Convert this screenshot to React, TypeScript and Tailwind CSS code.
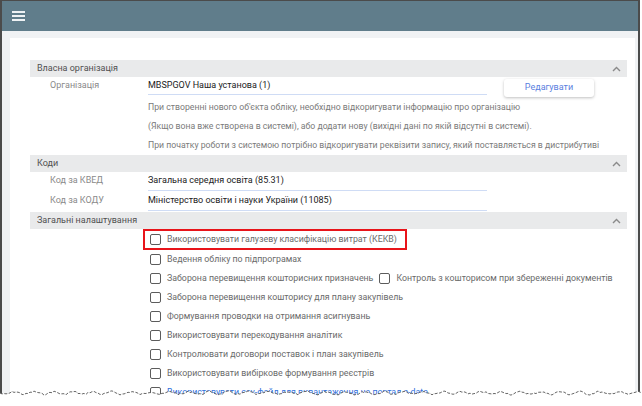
import React from 'react';

const font = { fontFamily: 'Roboto, "Liberation Sans", sans-serif' };

const Chevron = () => (
  <svg width="9" height="6" viewBox="0 0 9 6" className="mr-[6px]">
    <polyline points="1,5 4.5,1.5 8,5" fill="none" stroke="#8a8a8a" strokeWidth="1.4" />
  </svg>
);

const SectionHeader: React.FC<{ title: string }> = ({ title }) => (
  <div className="h-[17px] bg-[#e9eaeb] flex items-center justify-between pl-[7px] text-[9px] text-[#505050] whitespace-nowrap">
    <span>{title}</span>
    <Chevron />
  </div>
);

const Box = () => (
  <span className="inline-block w-[11px] h-[11px] border-[1.5px] border-[#5c5c5c] rounded-[2px] bg-white shrink-0" />
);

const CheckRow: React.FC<{ label: string }> = ({ label }) => (
  <div className="h-[19px] flex items-center pl-[120px] gap-[6px] text-[8.8px] text-[#6a6a6a] whitespace-nowrap">
    <Box />
    <span>{label}</span>
  </div>
);

// jagged line for the torn bottom edge of the screenshot
const tearPoints = (() => {
  const pts: string[] = [];
  let seed = 7;
  for (let x = 0; x <= 642; x += 2) {
    seed = (seed * 9301 + 49297) % 233280;
    const r = seed / 233280;
    const y = 4 + Math.sin(x / 3.1) * 1.3 + (r - 0.5) * 1.8;
    pts.push(`${x},${y.toFixed(1)}`);
  }
  return pts;
})();

export default function App() {
  return (
    <div className="relative w-[642px] h-[406px] bg-white overflow-hidden" style={font}>
      <div className="w-[640px] h-[406px] border-l-2 border-r-2 border-t border-[#4b4b4b] bg-[#f0f2f4] flex flex-col">
        <div className="h-[30px] bg-[#607d8b] flex items-center pl-[10px] shrink-0">
          <div className="flex flex-col gap-[2px] w-[13px]">
            <span className="h-[2px] bg-[#eef2f4]" />
            <span className="h-[2px] bg-[#eef2f4]" />
            <span className="h-[2px] bg-[#eef2f4]" />
          </div>
        </div>
        <div className="flex-1 pl-[8px] pt-[7px] pr-[3px]">
          <div className="bg-white h-full pl-[20px] pr-[8px] pt-[22px] whitespace-nowrap">
            <SectionHeader title="Власна організація" />
            <div className="h-[21px] flex items-start text-[9px]">
              <div className="w-[118px] pl-[20px] h-[18px] flex items-center text-[#8a8a8a]">Організація</div>
              <div className="w-[339px] h-[18px] flex items-center border-b border-[#cfdcf5] text-[#222]">
                MBSPGOV Наша установа (1)
              </div>
              <button className="ml-[17px] mt-[2px] w-[90px] h-[18px] bg-white rounded-[3px] shadow-[0_1px_3px_rgba(0,0,0,0.25)] text-[#5a80e0] text-[9px]">
                Редагувати
              </button>
            </div>
            <div className="pl-[118px] text-[8.7px] text-[#7a7a7a]">
              <div className="h-[19px] leading-[19px]">При створенні нового об'єкта обліку, необхідно відкоригувати інформацію про організацію</div>
              <div className="h-[19px] leading-[19px]">(Якщо вона вже створена в системі), або додати нову (вихідні дані по якій відсутні в системі).</div>
              <div className="h-[19px] leading-[19px]">При початку роботи з системою потрібно відкоригувати реквізити запису, який поставляється в дистрибутиві</div>
            </div>
            <SectionHeader title="Коди" />
            <div className="h-[19px] flex items-start text-[9px]">
              <div className="w-[118px] pl-[20px] h-[18px] flex items-center text-[#8a8a8a]">Код за КВЕД</div>
              <div className="w-[339px] h-[19px] flex items-center border-b border-[#cfdcf5] text-[#222]">
                Загальна середня освіта (85.31)
              </div>
            </div>
            <div className="h-[21px] flex items-start text-[9px]">
              <div className="w-[118px] pl-[20px] h-[19px] flex items-center text-[#8a8a8a]">Код за КОДУ</div>
              <div className="w-[339px] h-[20px] flex items-center border-b border-[#cfdcf5] text-[#222]">
                Міністерство освіти і науки України (11085)
              </div>
            </div>
            <SectionHeader title="Загальні налаштування" />
            <div className="h-[21px] w-[264px] ml-[113px] border-2 border-[#e8141a] flex items-center pl-[5px] gap-[6px] text-[8.8px] text-[#6a6a6a]">
              <Box />
              <span>Використовувати галузеву класифікацію витрат (КЕКВ)</span>
            </div>
            <CheckRow label="Ведення обліку по підпрограмах" />
            <div className="h-[19px] flex items-center pl-[120px] gap-[6px] text-[8.8px] text-[#6a6a6a]">
              <Box />
              <span>Заборона перевищення кошторисних призначень</span>
              <Box />
              <span>Контроль з кошторисом при збереженні документів</span>
            </div>
            <CheckRow label="Заборона перевищення кошторису для плану закупівель" />
            <CheckRow label="Формування проводки на отримання асигнувань" />
            <CheckRow label="Використовувати перекодування аналітик" />
            <CheckRow label="Контролювати договори поставок і план закупівель" />
            <CheckRow label="Використовувати вибіркове формування реєстрів" />
            <div className="h-[19px] flex items-center pl-[120px] gap-[6px] text-[8.8px]">
              <Box />
              <span className="text-[#2f6fdc] underline">Використовувати csv-файл для вивантаження на портал e-data</span>
            </div>
          </div>
        </div>
      </div>
      <svg className="absolute left-0 top-[389px]" width="642" height="17" viewBox="0 0 642 17">
        <polygon points={`${tearPoints.join(' ')} 642,17 0,17`} fill="#ffffff" />
        <polyline points={tearPoints.join(' ')} fill="none" stroke="#555" strokeWidth="0.9" strokeDasharray="3 1.5" />
      </svg>
    </div>
  );
}
